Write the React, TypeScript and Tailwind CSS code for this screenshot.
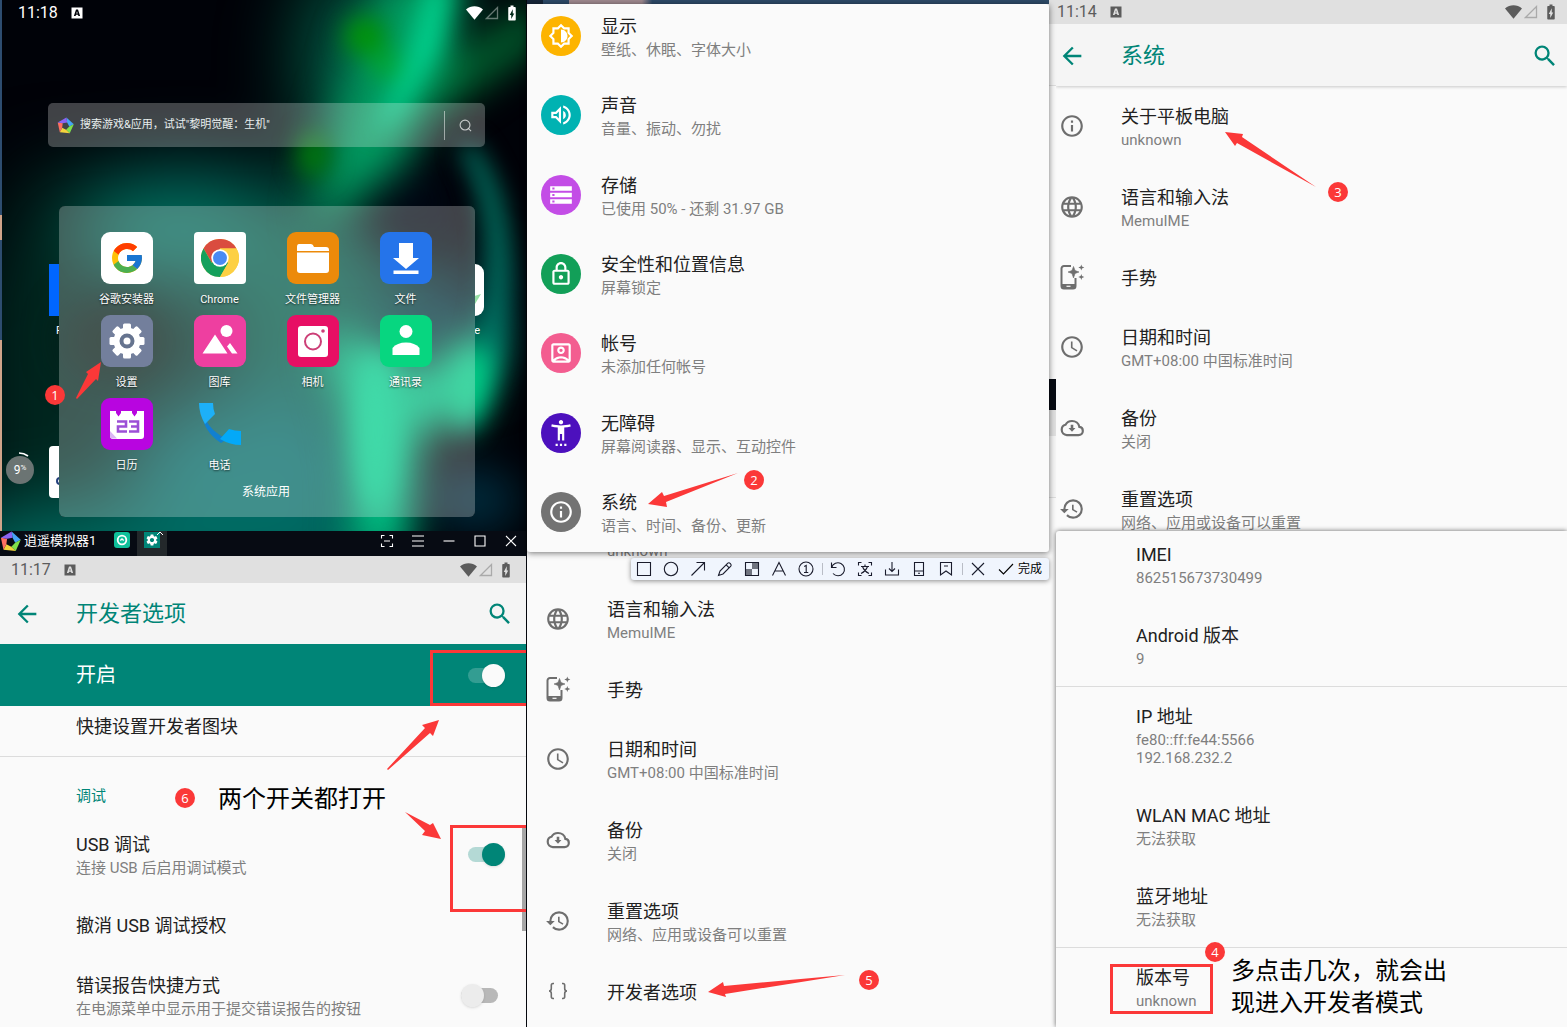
import React from 'react';
import type { ReactNode } from 'react';
import {
  MdAccessTime,
  MdArrowBack,
  MdBatteryChargingFull,
  MdHistory,
  MdInfoOutline,
  MdLanguage,
  MdOutlineAccountBox,
  MdOutlineBrightnessMedium,
  MdOutlineLock,
  MdOutlineVolumeUp,
  MdSearch,
  MdSettings,
  MdSettingsAccessibility,
  MdStorage,
} from 'react-icons/md';
import { FcGoogle } from 'react-icons/fc';

/* ---------- icons ---------- */

const LOGO_COLORS = ['#45a4f5', '#7fe04a', '#f3d33c', '#ff6f61', '#8a63f2'];

function PentagonLogo({ className }: { className: string }) {
  const point = (r: number, deg: number) => {
    const a = (deg * Math.PI) / 180;
    return `${(10 + r * Math.cos(a)).toFixed(2)},${(10.5 + r * Math.sin(a)).toFixed(2)}`;
  };
  return (
    <svg viewBox="0 0 20 20" className={className} aria-hidden="true">
      {LOGO_COLORS.map((c, i) => {
        const s = -84 + i * 72;
        return (
          <polygon
            key={c}
            fill={c}
            points={[point(10, s), point(10, s + 72), point(4.5, s + 92), point(4.5, s + 20)].join(' ')}
          />
        );
      })}
    </svg>
  );
}

function BackupIcon() {
  return (
    <svg viewBox="0 0 24 24" className="size-[26px]" fill="none" stroke="currentColor" strokeWidth="2" aria-hidden="true">
      <path d="M18.8 11C18.200 7.800 15.400 5.500 12 5.500 9.300 5.500 7.200 6.800 6 9 4 9.400 2.500 11.200 2.500 13.700 2.500 16.500 4.600 18.500 7.200 18.500H18C20.300 18.500 22 16.900 22 14.700 22 12.700 20.700 11.200 18.800 11z" />
      <path d="M12 9V13" strokeWidth="2.400" />
      <path d="M8.800 12H15.200L12 15.500z" fill="currentColor" stroke="none" />
    </svg>
  );
}

function GestureIcon() {
  return (
    <svg viewBox="0 0 26 26" className="size-[26px]" aria-hidden="true">
      <path d="M12 2H5A2.500 2.500 0 0 0 2.500 4.500V22A2.500 2.500 0 0 0 5 24.500H14A2.500 2.500 0 0 0 16.500 22V14" fill="none" stroke="currentColor" strokeWidth="2" />
      <path d="M2.500 20H16.500V22.500Q16.500 24.500 14 24.500H5Q2.500 24.500 2.500 22.500z" fill="currentColor" />
      <path d="M7.500 22.300H11.500" stroke="#fafafa" strokeWidth="1.200" />
      <path d="M14.500 2.500 16 6.500 20 8 16 9.500 14.500 14 13 9.500 9 8 13 6.500z" fill="currentColor" stroke="currentColor" strokeWidth=".6" />
      <path d="M22.300 .5 23 2.600 25.300 3.500 23 4.400 22.300 6.500 21.600 4.400 19.300 3.500 21.600 2.600zM22.300 10 23 12.100 25.300 13 23 13.900 22.300 16 21.600 13.900 19.300 13 21.600 12.100z" fill="currentColor" />
    </svg>
  );
}

function BracesIcon() {
  return (
    <svg viewBox="0 0 26 26" className="size-[26px]" fill="none" stroke="currentColor" strokeWidth="1.600" aria-hidden="true">
      <path d="M9 5.500H8Q6.300 5.500 6.300 7.500V10.500Q6.300 13 4 13 6.300 13 6.300 15.500V18.500Q6.300 20.500 8 20.500H9" />
      <path d="M17 5.500H18Q19.700 5.500 19.700 7.500V10.500Q19.700 13 22 13 19.700 13 19.700 15.500V18.500Q19.700 20.500 18 20.500H17" />
    </svg>
  );
}

/* ---------- annotation marks ---------- */

function Badge({ n, className }: { n: number; className: string }) {
  return (
    <span
      className={`absolute z-20 flex size-5 items-center justify-center rounded-full bg-[#fb3838] font-['Open_Sans','Noto_Sans',sans-serif] text-[13px] leading-5 text-white ${className}`}
    >
      {n}
    </span>
  );
}

function Arrow({ w, h, points, className }: { w: number; h: number; points: string; className: string }) {
  return (
    <svg width={w} height={h} viewBox={`0 0 ${w} ${h}`} className={`absolute z-20 ${className}`} aria-hidden="true">
      <polygon points={points} fill="#fb3838" />
    </svg>
  );
}

/* ---------- shared Android parts ---------- */

function StatusBar({ time, className }: { time: string; className: string }) {
  return (
    <div className={`relative flex shrink-0 items-center ${className}`}>
      <span className="text-base leading-6">{time}</span>
      <svg viewBox="0 0 12 12" className="ml-[13px] size-3" aria-label="A" role="img">
        <path
          fill="currentColor"
          fillRule="evenodd"
          d="M.5 .5H11.500V11.500H.5zM5 2.500 2.900 9H4.600L5 7.800H7L7.400 9H9.100L7 2.500zM5.300 6.600 6 4.200 6.700 6.600z"
        />
      </svg>
      <span className="ml-auto flex items-center">
        <svg viewBox="0 0 17 14" className="h-[14px] w-[17px]" aria-hidden="true">
          <path d="M0 3.500C5-.7 12-.7 17 3.500L8.500 13.800z" fill="currentColor" />
        </svg>
        <svg viewBox="0 0 14 14" className="ml-[2px] size-[14px] opacity-40" aria-hidden="true">
          <path d="M12.500 1.500V12.500H1.500z" fill="none" stroke="currentColor" strokeWidth="1.300" />
        </svg>
        <MdBatteryChargingFull className="ml-1 size-[18px]" aria-hidden="true" />
      </span>
    </div>
  );
}

function AppHeader({ title, className }: { title: string; className: string }) {
  return (
    <header className={`flex shrink-0 items-center bg-[#f5f5f5] text-[#008577] ${className}`}>
      <button type="button" aria-label="返回">
        <MdArrowBack className="size-7" />
      </button>
      <h2 className="ml-[35px] text-[22px] leading-8">{title}</h2>
      <button type="button" aria-label="搜索" className="ml-auto">
        <MdSearch className="size-7" />
      </button>
    </header>
  );
}

function RowText({ title, sub }: { title: string; sub?: string[] }) {
  return (
    <span className="block">
      <span className="block text-lg leading-6 text-[#212121]">{title}</span>
      {sub && (
        <span className="block py-[2px] text-[15px] leading-[18px] text-[#7f7f7f]">
          {sub.map((s) => (
            <span key={s} className="block">
              {s}
            </span>
          ))}
        </span>
      )}
    </span>
  );
}

type SystemItem = { icon: ReactNode; title: string; sub?: string };

const ICON = 'size-[26px]';

const aboutItem: SystemItem = { icon: <MdInfoOutline className={ICON} />, title: '关于平板电脑', sub: 'unknown' };

const commonItems: SystemItem[] = [
  { icon: <MdLanguage className={ICON} />, title: '语言和输入法', sub: 'MemuIME' },
  { icon: <GestureIcon />, title: '手势' },
  { icon: <MdAccessTime className={ICON} />, title: '日期和时间', sub: 'GMT+08:00 中国标准时间' },
  { icon: <BackupIcon />, title: '备份', sub: '关闭' },
  { icon: <MdHistory className={ICON} />, title: '重置选项', sub: '网络、应用或设备可以重置' },
];

function SystemList({ items, className }: { items: SystemItem[]; className: string }) {
  return (
    <ul className={className}>
      {items.map((it) => (
        <li key={it.title}>
          <button type="button" className="flex w-full items-center gap-9 pt-[18px] pb-[17px] text-left">
            <span className={it.sub ? 'pb-1 text-[#6e6e6e]' : '-my-1 pb-1 text-[#6e6e6e]'}>{it.icon}</span>
            <RowText title={it.title} sub={it.sub ? [it.sub] : undefined} />
          </button>
        </li>
      ))}
    </ul>
  );
}

/* ---------- home screen ---------- */

function Wallpaper() {
  return (
    <svg viewBox="0 0 527 531" preserveAspectRatio="none" className="absolute inset-0 h-full w-full" aria-hidden="true">
      <defs>
        <filter id="glow-small" filterUnits="userSpaceOnUse" x="-100" y="-100" width="730" height="730" colorInterpolationFilters="sRGB">
          <feGaussianBlur stdDeviation="12" />
        </filter>
        <filter id="glow-mid" filterUnits="userSpaceOnUse" x="-100" y="-100" width="730" height="730" colorInterpolationFilters="sRGB">
          <feGaussianBlur stdDeviation="20" />
        </filter>
        <filter id="glow-large" filterUnits="userSpaceOnUse" x="-150" y="-150" width="830" height="830" colorInterpolationFilters="sRGB">
          <feGaussianBlur stdDeviation="38" />
        </filter>
      </defs>
      <rect width="527" height="531" fill="#000208" />
      <g filter="url(#glow-large)">
        <path d="M30 170H300V531H-20V300z" fill="#00261f" />
        <ellipse cx="185" cy="225" rx="110" ry="55" fill="#007060" />
        <ellipse cx="310" cy="300" rx="90" ry="110" fill="#005a48" />
        <ellipse cx="260" cy="470" rx="130" ry="80" fill="#006a68" />
        <ellipse cx="160" cy="560" rx="240" ry="60" fill="#006a60" />
        <ellipse cx="350" cy="60" rx="50" ry="100" fill="#005a44" />
        <ellipse cx="440" cy="320" rx="60" ry="40" fill="#004a58" />
      </g>
      <g filter="url(#glow-mid)">
        <ellipse cx="415" cy="205" rx="42" ry="42" fill="#000612" />
        <ellipse cx="115" cy="340" rx="50" ry="40" fill="#061a14" />
        <path d="M425 90 540 0V40L470 90 420 120z" fill="#00803c" />
        <path d="M380-30H470L450 70 400 170 310 230 330 130z" fill="#009a60" />
        <path d="M340 330Q390 350 420 370L460 340 500 330 480 420 420 430 405 560H350Q360 430 320 350z" fill="#00c083" />
        <ellipse cx="475" cy="500" rx="45" ry="35" fill="#002838" />
      </g>
      <g filter="url(#glow-small)">
        <path d="M430-20H452L440 50 400 115 375 135 408 60z" fill="#00d490" />
        <ellipse cx="366" cy="36" rx="20" ry="18" fill="#009600" />
        <ellipse cx="386" cy="64" rx="14" ry="14" fill="#00a82c" />
        <ellipse cx="314" cy="155" rx="16" ry="22" fill="#007a08" />
        <path d="M470 140Q515 190 510 290 505 390 465 440L460 390Q492 320 488 250 486 190 460 150z" fill="#007c6a" />
        <ellipse cx="472" cy="385" rx="15" ry="40" fill="#00d68a" transform="rotate(14 472 385)" />
        <ellipse cx="376" cy="430" rx="20" ry="80" fill="#00ce8c" />
      </g>
      <path d="M0 0H2V531H0z" fill="#2e4d70" />
      <path d="M0 215H2V240H0zM0 340H2V531H0z" fill="#d0a48a" />
    </svg>
  );
}

const TILE = 'size-[52px]';

function Tile({ bg, children }: { bg: string; children: ReactNode }) {
  return (
    <span className={`flex size-[52px] items-center justify-center overflow-hidden rounded-[9px] ${bg}`}>{children}</span>
  );
}

const homeApps: { label: string; icon: ReactNode }[] = [
  {
    label: '谷歌安装器',
    icon: (
      <Tile bg="bg-white">
        <FcGoogle className="size-[36px]" />
      </Tile>
    ),
  },
  {
    label: 'Chrome',
    icon: (
      <span className="flex size-[52px] items-center justify-center rounded-[4px] bg-white">
        <svg viewBox="0 0 48 48" className="size-[38px]" aria-hidden="true">
          <circle cx="24" cy="24" r="24" fill="#fdd043" />
          <path d="M3.200 12A24 24 0 0 1 44.800 12H24L13.600 30z" fill="#da4c3f" />
          <path d="M3.200 12A24 24 0 0 0 24 48L34.400 30 24 24 13.600 30z" fill="#14a05c" />
          <path d="M44.800 12H24V24L34.400 30 24 48A24 24 0 0 0 44.800 12z" fill="#fdd043" />
          <circle cx="24" cy="24" r="11" fill="#fff" />
          <circle cx="24" cy="24" r="8.800" fill="#4a8af4" />
        </svg>
      </span>
    ),
  },
  {
    label: '文件管理器',
    icon: (
      <Tile bg="bg-[#ec8a0a]">
        <svg viewBox="0 0 52 52" className={TILE} aria-hidden="true">
          <path d="M12 12H24Q26 12 27 15H39Q42 15 42 18V19H10V15Q10 12 12 12z" fill="#fff" />
          <path d="M10 20.500H42V38Q42 41 39 41H13Q10 41 10 38z" fill="#fff" />
        </svg>
      </Tile>
    ),
  },
  {
    label: '文件',
    icon: (
      <Tile bg="bg-[#2574ea]">
        <svg viewBox="0 0 52 52" className={TILE} aria-hidden="true">
          <path d="M19 11H33V26H39L26 37 13 26H19zM13.500 38.500H38.500V42H13.500z" fill="#fff" />
        </svg>
      </Tile>
    ),
  },
  {
    label: '设置',
    icon: (
      <Tile bg="bg-[#737f9c]">
        <svg viewBox="0 0 52 52" className={TILE} aria-hidden="true">
          <g fill="#fff">
            {[0, 45, 90, 135].map((a) => (
              <rect key={a} x="22" y="8.500" width="8" height="35" rx="1.500" transform={`rotate(${a} 26 26)`} />
            ))}
            <circle cx="26" cy="26" r="13.500" />
          </g>
          <circle cx="26" cy="26" r="5.500" fill="#fff" stroke="#66748f" strokeWidth="4" />
        </svg>
      </Tile>
    ),
  },
  {
    label: '图库',
    icon: (
      <Tile bg="bg-[#ee3fa0]">
        <svg viewBox="0 0 52 52" className={TILE} aria-hidden="true">
          <circle cx="32.500" cy="16" r="6" fill="#fff" />
          <path d="M21 19.500 33.500 38.500H8.500zM36 28 43.500 38.500H38L33 31.500z" fill="#fff" />
        </svg>
      </Tile>
    ),
  },
  {
    label: '相机',
    icon: (
      <Tile bg="bg-[#e70f64]">
        <svg viewBox="0 0 52 52" className={TILE} aria-hidden="true">
          <rect x="11" y="11" width="30" height="31" rx="3" fill="#fff" />
          <circle cx="26" cy="26.500" r="8" fill="none" stroke="#cc3f77" strokeWidth="2" />
          <circle cx="36" cy="16" r="1.800" fill="#cc3f77" />
        </svg>
      </Tile>
    ),
  },
  {
    label: '通讯录',
    icon: (
      <Tile bg="bg-[#07d680]">
        <svg viewBox="0 0 52 52" className={TILE} aria-hidden="true">
          <circle cx="26" cy="16.500" r="6.500" fill="#fff" />
          <path d="M12.500 40V33Q17 27.500 26 27.500T39.500 33V40z" fill="#fff" />
        </svg>
      </Tile>
    ),
  },
  {
    label: '日历',
    icon: (
      <Tile bg="bg-[#b805e0]">
        <svg viewBox="0 0 52 52" className={TILE} aria-hidden="true">
          <path d="M9 13H15V15L17.500 18.500 20 15V13H31V15L33.500 18.500 36 15V13H43V38Q43 41 40 41H12Q9 41 9 38z" fill="#fff" />
          <path d="M9 33 16 40.500H11.500Q9 40.500 9 38z" fill="#dcb4f5" />
          <g fill="none" stroke="#9c4fd6" strokeWidth="2.600">
            <path d="M16 23.500H25V28.500H17V33.500H26M28 23.500H37V33.500H28M30 28.500H37" />
          </g>
        </svg>
      </Tile>
    ),
  },
  {
    label: '电话',
    icon: (
      <svg viewBox="0 0 52 52" className={TILE} aria-hidden="true">
        <path d="M11 20Q17 34 33 41L27 45Q10 34 8 16z" fill="#1180d0" />
        <path d="M5 5H19Q19 11 21 16L11 26Q5 16 5 5z" fill="#1db0f8" />
        <path d="M47 33V47Q36 47 26 41L35 31Q41 33 47 33z" fill="#03a9f8" />
      </svg>
    ),
  },
];

function HomeScreen() {
  return (
    <section className="relative isolate flex h-[531px] flex-col overflow-hidden">
      <Wallpaper />
      <StatusBar time="11:18" className="h-[26px] pr-[5px] pl-[18px] text-white" />
      <div className="absolute top-[264px] left-[49px] h-[52px] w-4 bg-[#0066ff]" />
      <span className="absolute top-[321px] left-[56px] text-[11px] leading-5 text-white">P</span>
      <div className="absolute top-[264px] right-[42px] h-[52px] w-5 rounded-[9px] bg-white" />
      <svg viewBox="0 0 10 10" className="absolute top-[294px] right-[45px] size-[10px]" aria-hidden="true">
        <path d="M0 3 10 0 4 10z" fill="#97e0a5" />
      </svg>
      <span className="absolute top-[321px] right-[46px] text-[11px] leading-5 text-white">e</span>
      <div className="absolute top-[446px] left-[49px] h-[52px] w-4 rounded-[4px] bg-white" />
      <div className="absolute top-[477px] left-[56px] size-2 rounded-full border-2 border-[#24407c]" />

      <form className="relative mt-[77px] mr-[41px] ml-12 flex h-11 items-center rounded-[5px] bg-white/25 pl-[9px]">
        <PentagonLogo className="size-[17px]" />
        <input
          type="text"
          aria-label="搜索"
          placeholder={'搜索游戏&应用，试试"黎明觉醒：生机"'}
          className="ml-[6px] min-w-0 flex-1 bg-transparent text-[11px] leading-5 text-white outline-none placeholder:text-[#e8eeee]"
        />
        <span className="h-[29px] w-px bg-white/50" />
        <button type="button" aria-label="搜索游戏" className="flex w-10 justify-center text-white/70">
          <svg viewBox="0 0 14 14" className="size-[13px]" fill="none" stroke="currentColor" strokeWidth="1.200" aria-hidden="true">
            <circle cx="6.500" cy="6.500" r="5.300" />
            <path d="M10.300 10.300 13 13" />
          </svg>
        </button>
      </form>

      <div className="relative mt-[59px] mr-[51px] ml-[59px] h-[311px] rounded-md bg-[#47605f] pt-[26px] pr-[23px] pl-[21px]">
        <div className="absolute inset-0 overflow-hidden rounded-md">
          <div className="absolute -top-[206px] -right-[51px] -left-[59px] h-[531px]">
            <Wallpaper />
          </div>
          <div className="absolute inset-0 bg-white/25" />
        </div>
        <div className="relative grid grid-cols-4">
          {homeApps.map((a) => (
            <button key={a.label} type="button" className="flex h-[83px] flex-col items-center whitespace-nowrap">
              {a.icon}
              <span className="mt-[6px] text-[11px] leading-5 text-white [text-shadow:0_1px_2px_rgba(0,0,0,0.7)]">{a.label}</span>
            </button>
          ))}
        </div>
        <p className="relative pt-px text-center text-xs leading-5 text-white">系统应用</p>
      </div>

      <div className="absolute top-[456px] left-[6px] flex size-7 items-center justify-center rounded-full bg-[#6b7473] text-xs text-white">
        9<span className="mb-1 text-[8px]">%</span>
      </div>
      <svg viewBox="0 0 10 5" className="absolute top-[452px] left-[19px] h-[5px] w-[10px]" aria-hidden="true">
        <path d="M0 1Q5 1 9 4" fill="none" stroke="#fff" strokeWidth="1.600" />
      </svg>
      <Badge n={1} className="top-[385px] left-[45px]" />
      <Arrow w={26} h={37} points="25,0 10,10 12,12 0,36 1,37 20,17 22,19" className="top-[362px] left-[76px]" />
    </section>
  );
}

const windowButtons: { label: string; d: string }[] = [
  { label: '截图', d: 'M2.500 5.500V2.500H5.500M10.500 2.500H13.500V5.500M13.500 10.500V13.500H10.500M5.500 13.500H2.500V10.500M5 8H11' },
  { label: '菜单', d: 'M2 3H14M2 8H14M2 13H14' },
  { label: '最小化', d: 'M2.500 8H13.500' },
  { label: '最大化', d: 'M3 3H13V13H3z' },
  { label: '关闭', d: 'M3 3 13 13M13 3 3 13' },
];

function TaskBar() {
  return (
    <nav className="flex h-[25px] items-start bg-[#070b13] text-white">
      <PentagonLogo className="size-[21px]" />
      <span className="ml-[3px] text-[13px] leading-5">逍遥模拟器1</span>
      <button type="button" aria-label="应用中心" className="mt-px ml-[18px] flex size-4 items-center justify-center rounded-[3px] bg-[#0fc09a]">
        <svg viewBox="0 0 16 16" className="size-4" fill="none" stroke="#fff" aria-hidden="true">
          <circle cx="8" cy="8" r="4.300" strokeWidth="1.800" />
          <path d="M6.300 8.500 8 7 9.700 8.500" strokeWidth="1.400" />
        </svg>
      </button>
      <button type="button" aria-label="设置" className="relative ml-[7px] flex h-full w-[30px] items-start justify-center bg-[#23282b] pt-px">
        <span className="flex size-4 items-center justify-center bg-[#008577]">
          <MdSettings className="size-[14px]" />
        </span>
        <svg viewBox="0 0 8 5" className="absolute top-0 right-[3px] h-[5px] w-2" fill="none" stroke="#fff" aria-hidden="true">
          <path d="M1 4 4 1 7 4" />
        </svg>
      </button>
      <span className="ml-auto flex pt-[2px]">
        {windowButtons.map((b) => (
          <button key={b.label} type="button" aria-label={b.label} className="flex w-[31px] justify-center">
            <svg viewBox="0 0 16 16" className="size-4" fill="none" stroke="currentColor" strokeWidth="1.100" aria-hidden="true">
              <path d={b.d} />
            </svg>
          </button>
        ))}
      </span>
    </nav>
  );
}

/* ---------- developer options ---------- */

function DeveloperOptions() {
  return (
    <section className="relative flex flex-1 flex-col overflow-hidden bg-[#fafafa]">
      <StatusBar time="11:17" className="h-[27px] bg-[#e0e0e0] pr-[11px] pl-[11px] text-[#5c5c5c]" />
      <AppHeader title="开发者选项" className="h-[61px] pr-3 pl-[13px]" />
      <label className="relative flex h-[62px] items-center bg-[#008577] pr-[21px] pl-[76px] text-xl leading-8 text-white">
        开启
        <input
          type="checkbox"
          role="switch"
          defaultChecked
          className="relative ml-auto h-[15px] w-[37px] appearance-none rounded-full bg-white/20 before:absolute before:-top-1 before:right-0 before:size-[23px] before:rounded-full before:bg-[#fafafa] before:shadow"
        />
        <span className="absolute top-[6px] right-0 h-14 w-[96px] border-[3px] border-r-0 border-[#fb3838]" />
      </label>
      <div className="h-[51px] border-b border-[#dcdcdc] pt-[9px] pl-[76px]">
        <RowText title="快捷设置开发者图块" />
      </div>
      <h3 className="pt-[28px] pb-2 pl-[76px] text-[15px] leading-[22px] text-[#008577]">调试</h3>
      <label className="flex items-center pt-[18px] pr-[21px] pb-[17px] pl-[76px]">
        <RowText title="USB 调试" sub={['连接 USB 后启用调试模式']} />
        <input
          type="checkbox"
          role="switch"
          defaultChecked
          className="relative mb-1 ml-auto h-[15px] w-[37px] appearance-none rounded-full bg-[#b4d9d5] before:absolute before:-top-1 before:right-0 before:size-[23px] before:rounded-full before:bg-[#008577] before:shadow"
        />
      </label>
      <button type="button" className="flex pt-[18px] pb-[18px] pl-[76px] text-left">
        <RowText title="撤消 USB 调试授权" />
      </button>
      <label className="flex items-center pt-[18px] pr-7 pb-[6px] pl-[76px]">
        <RowText title="错误报告快捷方式" sub={['在电源菜单中显示用于提交错误报告的按钮']} />
        <input
          type="checkbox"
          role="switch"
          className="relative mb-1 ml-auto h-[15px] w-[37px] appearance-none rounded-full bg-[#b8b8b8] before:absolute before:-top-1 before:left-0 before:size-[23px] before:rounded-full before:bg-[#ececec] before:shadow"
        />
      </label>
      <div className="absolute top-[269px] right-0 h-[106px] w-1 bg-[#a6a6a6]" />
      <span className="absolute top-[269px] right-0 h-[87px] w-[76px] border-[3px] border-r-0 border-[#fb3838]" />
      <Badge n={6} className="top-[232px] left-[175px]" />
      <p className="absolute top-[227px] left-[218px] text-2xl leading-8 text-black">两个开关都打开</p>
      <Arrow w={52} h={50} points="52,0 35,5 38,8 0,49 1,50 43,13 46,16" className="top-[164px] left-[387px]" />
      <Arrow w={36} h={27} points="0,0 25,13 28,11 36,27 17,23 20,19" className="top-[256px] left-[405px]" />
    </section>
  );
}

/* ---------- settings window ---------- */

const settings: { bg: string; icon: ReactNode; title: string; sub: string }[] = [
  { bg: 'bg-[#fdb400]', icon: <MdOutlineBrightnessMedium />, title: '显示', sub: '壁纸、休眠、字体大小' },
  { bg: 'bg-[#00b2b2]', icon: <MdOutlineVolumeUp />, title: '声音', sub: '音量、振动、勿扰' },
  { bg: 'bg-[#c34de6]', icon: <MdStorage />, title: '存储', sub: '已使用 50% - 还剩 31.97 GB' },
  { bg: 'bg-[#129f58]', icon: <MdOutlineLock />, title: '安全性和位置信息', sub: '屏幕锁定' },
  { bg: 'bg-[#f35d90]', icon: <MdOutlineAccountBox />, title: '帐号', sub: '未添加任何帐号' },
  { bg: 'bg-[#4c10bd]', icon: <MdSettingsAccessibility />, title: '无障碍', sub: '屏幕阅读器、显示、互动控件' },
  { bg: 'bg-[#737373]', icon: <MdInfoOutline />, title: '系统', sub: '语言、时间、备份、更新' },
];

function SettingsWindow() {
  return (
    <div className="relative z-10 flex">
      <div className="relative z-10 min-w-0 flex-1">
        <div className="h-1 bg-[linear-gradient(90deg,#16263a_0_3%,#2d4a68_3%_8%,#a08a90_8%_22%,#2d4a68_24%)]" />
        <section className="relative overflow-hidden rounded-[3px] bg-[#fafafa] shadow-[0_1px_6px_rgba(0,0,0,0.55)]">
          <ul className="-mt-2 grid min-h-[556px] auto-rows-fr">
            {settings.map((s) => (
              <li key={s.title}>
                <button type="button" className="flex h-full w-full items-center gap-5 pl-[14px] text-left">
                  <span className={`flex size-10 items-center justify-center rounded-full text-[26px] text-white ${s.bg}`}>
                    {s.icon}
                  </span>
                  <span className="pt-1">
                    <RowText title={s.title} sub={[s.sub]} />
                  </span>
                </button>
              </li>
            ))}
          </ul>
          <Badge n={2} className="top-[466px] left-[217px]" />
          <Arrow w={90} h={34} points="0,31 14,19 16,23 90,0 18,29 19,34" className="top-[469px] left-[121px]" />
        </section>
      </div>
      <div className="flex w-[7px] flex-col bg-[#f9f9f9]">
        <div className="h-6 bg-[#e0e0e0]" />
        <div className="h-[62px] border-b border-[#dedede] bg-[#f5f5f5]" />
        <div className="h-[293px]" />
        <div className="h-[31px] bg-[#070b13]" />
        <div className="h-[26px] bg-[#e0e0e0]" />
        <div className="h-[62px] border-b border-[#dedede] bg-[#f5f5f5]" />
      </div>
    </div>
  );
}

const tools: { label: string; icon: ReactNode }[] = [
  { label: '矩形', icon: <path d="M1.500 1.500H14.500V14.500H1.500z" /> },
  { label: '椭圆', icon: <circle cx="8" cy="8" r="6.700" /> },
  { label: '箭头', icon: <path d="M1.500 14.500 14.500 1.500M6.500 1.500H14.500V9.500" /> },
  { label: '画笔', icon: <path d="M1.500 14.500 3 10 10.800 2.200Q12 1.200 13.400 2.600T13.800 5.200L6 13zM9.200 3.800 12.200 6.800" /> },
  {
    label: '马赛克',
    icon: (
      <>
        <path d="M8 1.500H14.500V8H8zM1.500 8H8V14.500H1.500z" fill="#70747f" stroke="none" />
        <path d="M1.500 1.500H14.500V14.500H1.500z" />
      </>
    ),
  },
  { label: '文字', icon: <path d="M1.500 14.500 8 1.500 14.500 14.500M4 10H12" /> },
  {
    label: '序号',
    icon: (
      <>
        <circle cx="8" cy="8" r="7" />
        <path d="M6.200 5.500 8.200 4.500V11.500M6 11.500H10.300" />
      </>
    ),
  },
];

const actions: { label: string; icon: ReactNode }[] = [
  { label: '撤销', icon: <path d="M1.500 1.500V6.500H6.500M1.700 6.500A6.500 6.500 0 1 1 3 12.500" /> },
  { label: '翻译', icon: <path d="M1.500 4.500V1.500H4.500M11.500 1.500H14.500V4.500M14.500 11.500V14.500H11.500M4.500 14.500H1.500V11.500M4 5.500H12M8 3.500V5.500M10.500 5.500Q9 10 4 12.500M5.500 5.500Q7 10 12 12.500" /> },
  { label: '下载', icon: <path d="M1.500 8.500V14H14.500V8.500M8 1V10.500M5 7.500 8 10.500 11 7.500" /> },
  { label: '发送到手机', icon: <path d="M3.500 1.500H12.500V14.500H3.500zM3.500 10H12.500M7 12.300H9" /> },
  { label: '收藏', icon: <path d="M2.500 1.500H13.500V14L8 10 2.500 14zM6 5H10" /> },
];

function ToolButton({ label, icon }: { label: string; icon: ReactNode }) {
  return (
    <button type="button" aria-label={label} className="flex w-[27px] justify-center">
      <svg viewBox="0 0 16 16" className="size-4" fill="none" stroke="currentColor" strokeWidth="1.100" aria-hidden="true">
        {icon}
      </svg>
    </button>
  );
}

function CaptureToolbar() {
  return (
    <div className="absolute top-[6px] right-[7px] z-20 flex h-[22px] items-center rounded-[3px] bg-[#f0f5fd] text-[#1a1c2c] shadow-[0_1px_5px_rgba(0,0,0,0.45)]">
      {tools.map((t) => (
        <ToolButton key={t.label} {...t} />
      ))}
      <span className="mx-[2px] h-3 w-px bg-[#b9bdc6]" />
      {actions.map((t) => (
        <ToolButton key={t.label} {...t} />
      ))}
      <span className="mx-[2px] h-3 w-px bg-[#b9bdc6]" />
      <ToolButton label="取消" icon={<path d="M2 2 14 14M14 2 2 14" />} />
      <button type="button" className="flex items-center pr-[7px] pl-[6px] text-xs leading-5 text-black">
        <svg viewBox="0 0 16 16" className="mr-1 size-4" fill="none" stroke="currentColor" strokeWidth="1.100" aria-hidden="true">
          <path d="M1 8.500 5.500 13 15 3" />
        </svg>
        完成
      </button>
    </div>
  );
}

/* ---------- about window ---------- */

const about: { title: string; sub: string[]; className: string }[] = [
  { title: 'IMEI', sub: ['862515673730499'], className: 'pt-3 pb-[17px]' },
  { title: 'Android 版本', sub: ['9'], className: 'pt-[18px] pb-4 border-b border-[#dcdcdc]' },
  { title: 'IP 地址', sub: ['fe80::ff:fe44:5566', '192.168.232.2'], className: 'pt-[18px] pb-[17px]' },
  { title: 'WLAN MAC 地址', sub: ['无法获取'], className: 'pt-[18px] pb-[17px]' },
  { title: '蓝牙地址', sub: ['无法获取'], className: 'pt-[18px] pb-4 border-b border-[#dcdcdc]' },
  { title: '版本号', sub: ['unknown'], className: 'pt-[18px] pb-[3px]' },
];

export default function App() {
  return (
    <main className="grid min-h-screen grid-cols-[527fr_529fr_511fr] overflow-hidden bg-[#fafafa] font-[Roboto,'Noto_Sans_CJK_SC',sans-serif]">
      <div className="flex min-w-0 flex-col border-r border-[#05070d]">
        <HomeScreen />
        <TaskBar />
        <DeveloperOptions />
      </div>

      <div className="flex min-w-0 flex-col">
        <SettingsWindow />
        <section className="relative flex-1 bg-[#fafafa]">
          <div className="h-7 overflow-hidden pl-20 text-[#7f7f7f]">
            <p className="-mt-[10px] text-[15px] leading-[18px]">unknown</p>
          </div>
          <SystemList
            items={[...commonItems, { icon: <BracesIcon />, title: '开发者选项' }]}
            className="pl-[18px]"
          />
          <CaptureToolbar />
          <Badge n={5} className="top-[418px] left-[332px]" />
          <Arrow w={137} h={22} points="0,17 15,7 16,11 137,0 17,19 18,22" className="top-[423px] left-[181px]" />
        </section>
      </div>

      <div className="flex min-w-0 flex-col">
        <section className="relative h-[531px] overflow-hidden bg-[#fafafa]">
          <StatusBar time="11:14" className="h-6 bg-[#e0e0e0] pr-[7px] pl-px text-[#5c5c5c]" />
          <AppHeader title="系统" className="h-[62px] pt-[2px] pr-2 pl-[2px] shadow-[0_1px_3px_rgba(0,0,0,0.2)]" />
          <SystemList items={[aboutItem, ...commonItems]} className="pt-px pl-[3px]" />
          <Badge n={3} className="top-[182px] left-[272px]" />
          <Arrow w={91} h={55} points="0,0 18,2 17,5 91,55 12,11 10,14" className="top-[132px] left-[169px]" />
        </section>
        <section className="relative z-10 flex-1 rounded-tl-[3px] bg-[#fafafa] shadow-[0_0_5px_rgba(0,0,0,0.6)]">
          <dl>
            {about.map((a) => (
              <div key={a.title} className={`pl-20 ${a.className}`}>
                <dt className="text-lg leading-6 text-[#212121]">{a.title}</dt>
                <dd className="py-[2px] text-[15px] leading-[18px] text-[#7f7f7f]">
                  {a.sub.map((s) => (
                    <span key={s} className="block">
                      {s}
                    </span>
                  ))}
                </dd>
              </div>
            ))}
          </dl>
          <span className="absolute top-[433px] left-[54px] h-[50px] w-[103px] border-[3px] border-[#fb3838]" />
          <Badge n={4} className="top-[411px] left-[149px]" />
          <p className="absolute top-[424px] left-[175px] text-2xl leading-8 text-black">
            多点击几次，就会出
            <br />
            现进入开发者模式
          </p>
        </section>
      </div>
    </main>
  );
}
